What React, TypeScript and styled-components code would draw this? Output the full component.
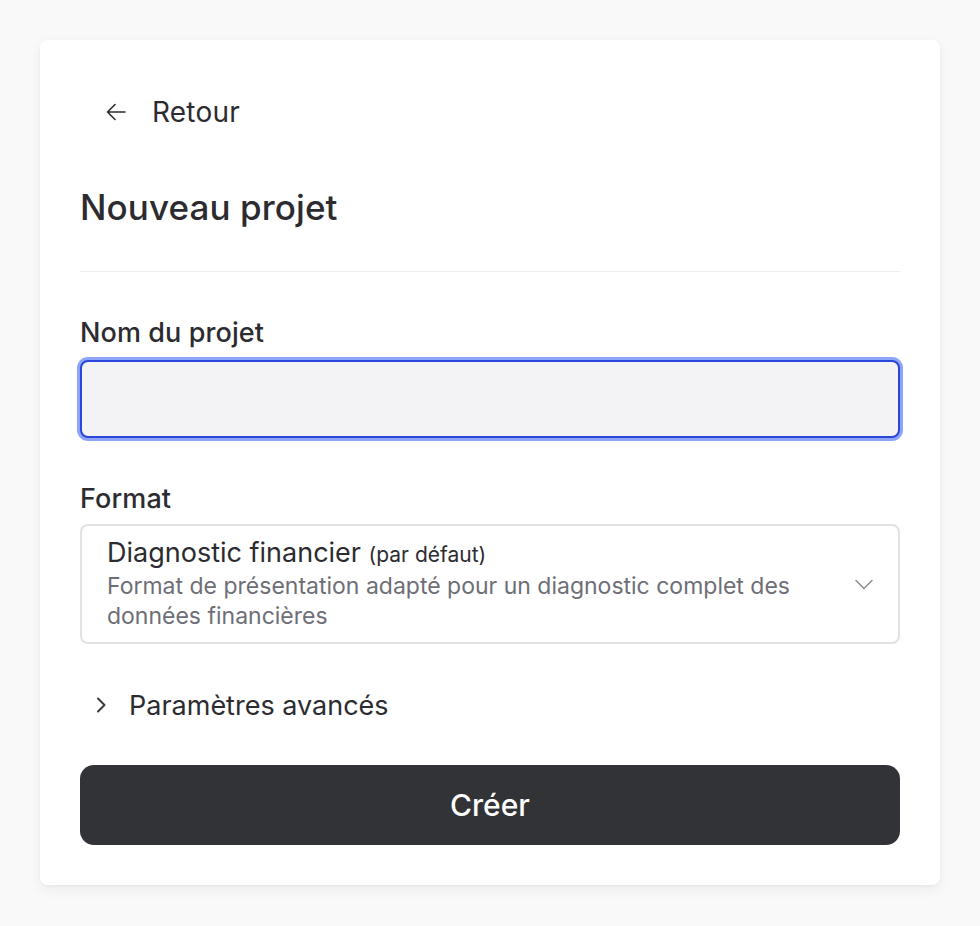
import { type FC, useState } from "react";
import styled, { createGlobalStyle } from "styled-components";

const GlobalStyle = createGlobalStyle`
  html, body {
    margin: 0;
    padding: 0;
    background: #f9f9f9;
    font-family: Inter, "Noto Sans", sans-serif;
    color: #2c2c30;
  }
  * {
    box-sizing: border-box;
  }
`;

const Page = styled.div`
  padding: 40px;
  min-height: 926px;
`;

const Card = styled.div`
  background: #fff;
  border-radius: 8px;
  padding: 40px;
  box-shadow: 0 4px 14px rgba(0, 0, 0, 0.06), 0 1px 3px rgba(0, 0, 0, 0.04);
  display: flex;
  flex-direction: column;
`;

const BackButton = styled.button`
  display: flex;
  align-items: center;
  gap: 24px;
  align-self: flex-start;
  height: 64px;
  padding: 0 24px;
  border: none;
  background: transparent;
  font-family: inherit;
  font-size: 28px;
  letter-spacing: 0.2px;
  color: #2c2c30;
  cursor: pointer;
`;

const Title = styled.h1`
  margin: 43px 0 0;
  font-size: 35px;
  line-height: 40px;
  font-weight: 500;
  letter-spacing: 0.1px;
`;

const Divider = styled.hr`
  margin: 44px 0 0;
  border: none;
  height: 1px;
  background: #eeeef0;
`;

const Field = styled.div<{ $top: number; $gap: number }>`
  display: flex;
  flex-direction: column;
  gap: ${(p) => p.$gap}px;
  margin-top: ${(p) => p.$top}px;
`;

const Label = styled.label`
  font-size: 27px;
  line-height: 32px;
  font-weight: 500;
  letter-spacing: 0.1px;
`;

const TextInput = styled.input`
  height: 78px;
  border-radius: 8px;
  border: 2px solid #2b46dc;
  box-shadow: 0 0 0 3px #8ea4f8;
  background: #f3f3f6;
  outline: none;
  padding: 0 24px;
  font-family: inherit;
  font-size: 24px;
`;

const Select = styled.div`
  display: flex;
  align-items: center;
  gap: 16px;
  border: 2px solid #e2e2e6;
  border-radius: 8px;
  padding: 11px 24px 11px 25px;
  cursor: pointer;
`;

const SelectText = styled.div`
  flex: 1;
  display: flex;
  flex-direction: column;
`;

const OptionName = styled.div`
  font-size: 27px;
  line-height: 32px;
  color: #2c2c30;
`;

const OptionHint = styled.span`
  font-size: 21px;
`;

const OptionDescription = styled.div`
  font-size: 23px;
  line-height: 30px;
  color: #6e6e76;
`;

const Advanced = styled.button`
  display: flex;
  align-items: center;
  gap: 22px;
  align-self: flex-start;
  height: 48px;
  margin-top: 37px;
  padding: 0 0 0 15px;
  border: none;
  background: transparent;
  font-family: inherit;
  font-size: 27px;
  color: #2c2c30;
  cursor: pointer;
`;

const SubmitButton = styled.button`
  margin-top: 36px;
  height: 80px;
  border: none;
  border-radius: 14px;
  background: #323337;
  color: #fff;
  font-family: inherit;
  font-size: 30px;
  font-weight: 500;
  cursor: pointer;
`;

const ArrowLeft: FC = () => (
  <svg width="24" height="24" viewBox="0 0 24 24" fill="none" stroke="currentColor" strokeWidth="1.6" strokeLinecap="round" strokeLinejoin="round">
    <path d="M21 12H3.5M11 4.5 3.5 12l7.5 7.5" />
  </svg>
);

const ChevronDown: FC = () => (
  <svg width="20" height="20" viewBox="0 0 20 20" fill="none" stroke="#8a8a92" strokeWidth="1.5" strokeLinecap="round" strokeLinejoin="round">
    <path d="M2 6.5l8 8 8-8" />
  </svg>
);

const ChevronRight: FC = () => (
  <svg width="12" height="20" viewBox="0 0 12 20" fill="none" stroke="#3a3a3e" strokeWidth="2" strokeLinecap="round" strokeLinejoin="round">
    <path d="M3 3.5l6.5 6.5-6.5 6.5" />
  </svg>
);

const App: FC = () => {
  const [name, setName] = useState("");

  return (
    <Page>
      <GlobalStyle />
      <Card>
        <BackButton>
          <ArrowLeft />
          Retour
        </BackButton>
        <Title>Nouveau projet</Title>
        <Divider />

        <Field $top={45} $gap={11}>
          <Label htmlFor="project-name">Nom du projet</Label>
          <TextInput
            id="project-name"
            value={name}
            onChange={(event) => setName(event.target.value)}
          />
        </Field>

        <Field $top={45} $gap={9}>
          <Label>Format</Label>
          <Select>
            <SelectText>
              <OptionName>
                Diagnostic financier <OptionHint>(par défaut)</OptionHint>
              </OptionName>
              <OptionDescription>
                Format de présentation adapté pour un diagnostic complet des
                données financières
              </OptionDescription>
            </SelectText>
            <ChevronDown />
          </Select>
        </Field>

        <Advanced>
          <ChevronRight />
          Paramètres avancés
        </Advanced>

        <SubmitButton>Créer</SubmitButton>
      </Card>
    </Page>
  );
};

export default App;
